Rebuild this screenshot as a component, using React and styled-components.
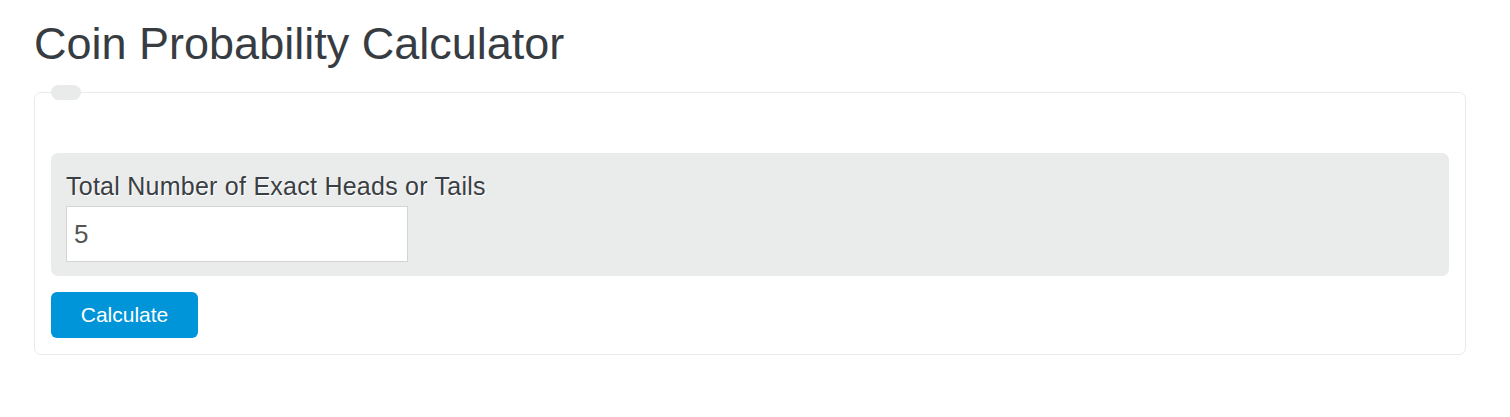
import React from 'react'
import styled, { createGlobalStyle } from 'styled-components'

const Global = createGlobalStyle`
  body {
    margin: 0;
    background: #fff;
    font-family: "Liberation Sans", Arial, sans-serif;
    color: #3a3f44;
  }
`

const Page = styled.div`
  padding: 19px 44px 0 34px;
`

const Title = styled.h1`
  margin: 0 0 16px 0;
  font-size: 45px;
  font-weight: 400;
  line-height: 50px;
  color: #373c42;
`

const Form = styled.fieldset`
  margin: 0;
  padding: 0 16px 16px 16px;
  border: 1px solid #e9eaea;
  border-radius: 7px;
  min-width: 0;
`

const Legend = styled.legend`
  width: 30px;
  height: 15px;
  padding: 0;
  margin-left: 0;
  background: #e9eaea;
  border-radius: 8px;
`

const Fields = styled.div`
  margin-top: 53px;
  background: #eaebeb;
  border-radius: 7px;
  padding: 15px 15px 14px;
  display: flex;
  flex-direction: column;
  align-items: flex-start;
`

const Label = styled.label`
  font-size: 25px;
  line-height: 36px;
  letter-spacing: 0.25px;
  color: #3a3f44;
  text-shadow: 1px 1px 0 #fff;
  margin-bottom: 2px;
`

const Input = styled.input`
  box-sizing: border-box;
  width: 342px;
  height: 56px;
  border: 1px solid #d3d4d4;
  background: #fff;
  padding: 0 7px;
  font-family: inherit;
  font-size: 26px;
  color: #555;
  outline: none;
`

const Button = styled.button`
  margin-top: 16px;
  width: 147px;
  height: 46px;
  border: 0;
  border-radius: 6px;
  background: #0094d9;
  color: #fff;
  font-family: inherit;
  font-size: 21px;
  cursor: pointer;
`

export default function App() {
  return (
    <>
      <Global />
      <Page>
        <Title>Coin Probability Calculator</Title>
        <Form>
          <Legend />
          <Fields>
            <Label htmlFor="heads">Total Number of Exact Heads or Tails</Label>
            <Input id="heads" defaultValue="5" />
          </Fields>
          <Button>Calculate</Button>
        </Form>
      </Page>
    </>
  )
}
